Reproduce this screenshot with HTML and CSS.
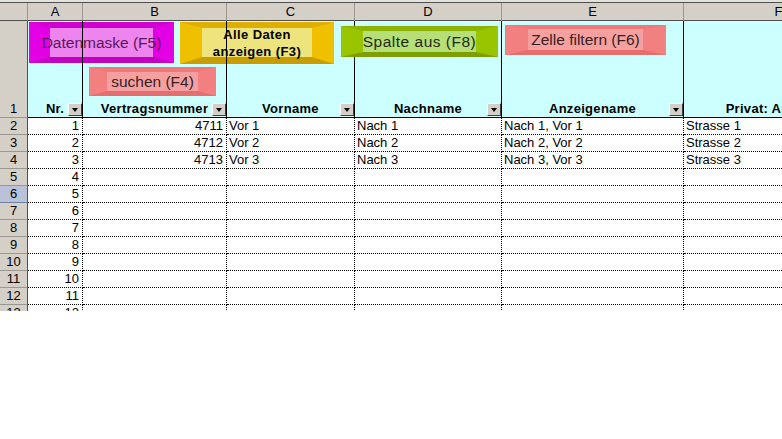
FILE: index.html
```html
<!DOCTYPE html>
<html lang="de">
<head>
    <meta charset="UTF-8">
    <meta name="viewport" content="width=device-width, initial-scale=1.0">
    <title>Vertragsliste</title>
    <link rel="stylesheet" href="styles.css">
</head>
<body>
    <div class="sheet">
        <div class="grid">
            <!-- column letters -->
            <div class="corner"></div>
            <div class="colhdr">A</div>
            <div class="colhdr">B</div>
            <div class="colhdr">C</div>
            <div class="colhdr">D</div>
            <div class="colhdr">E</div>
            <div class="colhdr">F</div>

            <!-- row 1: field names with auto filter -->
            <div class="rowhdr first">1</div>
            <div class="head">Nr.<span class="drop"></span></div>
            <div class="head">Vertragsnummer<span class="drop"></span></div>
            <div class="head">Vorname<span class="drop"></span></div>
            <div class="head">Nachname<span class="drop"></span></div>
            <div class="head">Anzeigename<span class="drop"></span></div>
            <div class="head">Privat: Anschrift</div>

            <div class="rowhdr">2</div>
            <div class="cell num">1</div>
            <div class="cell num">4711</div>
            <div class="cell">Vor 1</div>
            <div class="cell">Nach 1</div>
            <div class="cell">Nach 1, Vor 1</div>
            <div class="cell">Strasse 1</div>

            <div class="rowhdr">3</div>
            <div class="cell num">2</div>
            <div class="cell num">4712</div>
            <div class="cell">Vor 2</div>
            <div class="cell">Nach 2</div>
            <div class="cell">Nach 2, Vor 2</div>
            <div class="cell">Strasse 2</div>

            <div class="rowhdr">4</div>
            <div class="cell num">3</div>
            <div class="cell num">4713</div>
            <div class="cell">Vor 3</div>
            <div class="cell">Nach 3</div>
            <div class="cell">Nach 3, Vor 3</div>
            <div class="cell">Strasse 3</div>

            <div class="rowhdr">5</div>
            <div class="cell num">4</div>
            <div class="cell"></div><div class="cell"></div><div class="cell"></div><div class="cell"></div><div class="cell"></div>

            <div class="rowhdr selected">6</div>
            <div class="cell num">5</div>
            <div class="cell"></div><div class="cell"></div><div class="cell"></div><div class="cell"></div><div class="cell"></div>

            <div class="rowhdr">7</div>
            <div class="cell num">6</div>
            <div class="cell"></div><div class="cell"></div><div class="cell"></div><div class="cell"></div><div class="cell"></div>

            <div class="rowhdr">8</div>
            <div class="cell num">7</div>
            <div class="cell"></div><div class="cell"></div><div class="cell"></div><div class="cell"></div><div class="cell"></div>

            <div class="rowhdr">9</div>
            <div class="cell num">8</div>
            <div class="cell"></div><div class="cell"></div><div class="cell"></div><div class="cell"></div><div class="cell"></div>

            <div class="rowhdr">10</div>
            <div class="cell num">9</div>
            <div class="cell"></div><div class="cell"></div><div class="cell"></div><div class="cell"></div><div class="cell"></div>

            <div class="rowhdr">11</div>
            <div class="cell num">10</div>
            <div class="cell"></div><div class="cell"></div><div class="cell"></div><div class="cell"></div><div class="cell"></div>

            <div class="rowhdr">12</div>
            <div class="cell num">11</div>
            <div class="cell"></div><div class="cell"></div><div class="cell"></div><div class="cell"></div><div class="cell"></div>

            <div class="rowhdr">13</div>
            <div class="cell num">12</div>
            <div class="cell"></div><div class="cell"></div><div class="cell"></div><div class="cell"></div><div class="cell"></div>
        </div>

        <!-- macro buttons drawn over row 1 -->
        <div class="shape magenta datenmaske">Datenmaske (F5)</div>
        <div class="shape salmon suchen">suchen (F4)</div>
        <div class="shape gold alle">Alle Daten<br>anzeigen (F3)</div>
        <div class="shape green spalte">Spalte aus (F8)</div>
        <div class="shape salmon filtern">Zelle filtern (F6)</div>
    </div>
</body>
</html>
```

FILE: styles.css
```css
body {
    margin: 0;
    background: #fff;
    font-family: "Liberation Sans", Arial, sans-serif;
}
.sheet {
    position: relative;
    width: 782px;
    height: 311px;
    overflow: hidden;
    background: #e4e2dc;
    padding-top: 2px;
    box-sizing: border-box;
}
.grid {
    display: grid;
    grid-template-columns: 28px 55px 144px 128px 147px 182px 190px;
    grid-template-rows: 18px 97px repeat(12, 17px);
    border-top: 1px solid #505050;
    background: #fff;
}
.grid > div {
    box-sizing: border-box;
    white-space: nowrap;
    overflow: hidden;
}
.corner,
.colhdr {
    background: #d4d0c8;
    border-right: 1px solid #9a9790;
    border-bottom: 1px solid #505050;
}
.colhdr {
    font-size: 13px;
    line-height: 17px;
    text-align: center;
    color: #000;
}
.rowhdr {
    background: #d4d0c8;
    border-right: 1px solid #505050;
    border-bottom: 1px solid #9a9790;
    font-size: 13px;
    line-height: 16px;
    text-align: center;
}
.rowhdr.first {
    display: flex;
    align-items: flex-end;
    justify-content: center;
}
.rowhdr.selected {
    background: #b9c2d8;
    border-bottom-color: #6f7fa3;
}
.head {
    position: relative;
    background: #ccffff;
    border-right: 1px solid #000;
    border-bottom: 1px solid #000;
    display: flex;
    align-items: flex-end;
    justify-content: center;
    font-size: 13px;
    font-weight: bold;
    letter-spacing: 0.3px;
    line-height: 15px;
    padding-bottom: 1px;
}
.drop {
    position: absolute;
    right: 0;
    bottom: 1px;
    width: 14px;
    height: 13px;
    box-sizing: border-box;
    background: #d4d0c8;
    border: 1px solid;
    border-color: #fff #404040 #404040 #fff;
}
.drop::after {
    content: "";
    position: absolute;
    left: 3px;
    top: 4px;
    border-left: 3.5px solid transparent;
    border-right: 3.5px solid transparent;
    border-top: 4px solid #000;
}
.cell {
    border-right: 1px dotted #000;
    border-bottom: 1px dotted #000;
    font-size: 13px;
    line-height: 16px;
    padding: 0 2px;
    color: #000;
}
.cell.num {
    text-align: right;
    padding-right: 3px;
}

/* bevelled macro buttons */
.shape {
    position: absolute;
    box-sizing: border-box;
    border-style: solid;
    display: flex;
    align-items: center;
    justify-content: center;
    white-space: nowrap;
    font-size: 15.5px;
    color: #2a2a2a;
    text-align: center;
}
.magenta {
    background: #ee84ee;
    border-color: #d000d0 #e400e4 #c200c2 #e400e4;
    color: #5a185a;
}
.salmon {
    background: #f5a0a0;
    border-color: #f07878 #f38080 #e66e6e #f38080;
    color: #3a2020;
}
.gold {
    background: #ede47e;
    border-color: #deaf00 #efc000 #c99c00 #efc000;
    color: #000;
}
.green {
    background: #b6df78;
    border-color: #8db300 #99c400 #7d9f00 #99c400;
    color: #1e2a10;
    letter-spacing: 0.5px;
}
.datenmaske {
    left: 29px;
    top: 22px;
    width: 145px;
    height: 41px;
    border-width: 6px 21px;
}
.datenmaske::after,
.alle::after {
    content: "";
    position: absolute;
    top: -6px;
    bottom: -6px;
    width: 1px;
    background: #000;
}
.datenmaske::after {
    left: 32px;
}
.suchen {
    left: 89px;
    top: 67px;
    width: 127px;
    height: 29px;
    border-width: 5px 18px;
}
.alle {
    left: 180px;
    top: 22px;
    width: 154px;
    height: 42px;
    border-width: 6px 22px 7px;
    font-size: 13px;
    font-weight: bold;
    letter-spacing: 0.4px;
    line-height: 17px;
}
.alle::after {
    left: 24px;
    bottom: -7px;
}
.spalte {
    left: 341px;
    top: 26px;
    width: 157px;
    height: 31px;
    border-width: 5px 22px;
}
.filtern {
    left: 505px;
    top: 25px;
    width: 161px;
    height: 30px;
    border-width: 4px 23px 5px;
}
```
